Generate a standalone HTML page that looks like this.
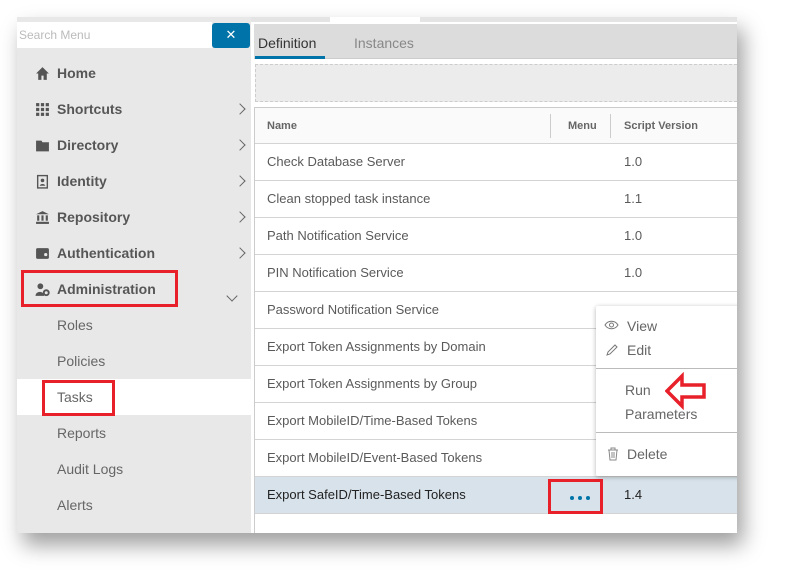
<!DOCTYPE html>
<html><head><style>
*{margin:0;padding:0;box-sizing:border-box}
body{width:785px;height:582px;background:#fff;position:relative;overflow:hidden;font-family:"Liberation Sans",sans-serif}
.a{position:absolute}
.frame{left:17px;top:17px;width:720px;height:516px;background:#fff;box-shadow:6px 12px 20px rgba(0,0,0,.38);overflow:hidden}
.side{left:0;top:0;width:234px;height:516px;background:#e8e8e8}
.mi{position:absolute;left:18px;font-size:14px;font-weight:bold;color:#565656}
.mi svg{position:absolute;left:0;top:1px}
.mi span{position:absolute;left:22px;white-space:nowrap}
.sub{position:absolute;left:40px;font-size:14px;color:#666}
.chev{position:absolute;left:219px;width:8px;height:8px;border-right:1.5px solid #666;border-top:1.5px solid #666;transform:rotate(45deg)}
.row{position:absolute;left:238px;width:482px;height:37px;border-bottom:1px solid #d4d4d4;font-size:13px;color:#5a5a5a}
.row .n{position:absolute;left:12px;top:10px;white-space:nowrap}
.row .v{position:absolute;left:369px;top:10px}
.red{position:absolute;border:3px solid #e8202a}
.dot{position:absolute;width:4px;height:4px;border-radius:2px;background:#0073a8;top:19px}
</style></head><body>
<div class="a frame">
 <div class="a" style="left:0;top:0;width:720px;height:5px;background:#e4e4e4"></div>
 <div class="a" style="left:313px;top:0;width:90px;height:5px;background:#fff"></div>
 <div class="a side">
  <div class="a" style="left:0;top:5px;width:195px;height:26px;background:#fff;font-size:12px;color:#bbb;padding:6px 2px">Search Menu</div>
  <div class="a" style="left:195px;top:6px;width:38px;height:25px;background:#0073a8;border-radius:3px;color:#fff;text-align:center;font-size:13px;line-height:24px">✕</div>
  <div class="mi" style="top:48px"><svg width="15" height="15" viewBox="0 0 14 14"><path d="M7 1L1 7h2v6h3V9h2v4h3V7h2z" fill="#555"/></svg><span>Home</span></div>
  <div class="mi" style="top:84px"><svg width="15" height="15" viewBox="0 0 14 14" fill="#555"><rect x="1" y="1" width="3" height="3"/><rect x="5.5" y="1" width="3" height="3"/><rect x="10" y="1" width="3" height="3"/><rect x="1" y="5.5" width="3" height="3"/><rect x="5.5" y="5.5" width="3" height="3"/><rect x="10" y="5.5" width="3" height="3"/><rect x="1" y="10" width="3" height="3"/><rect x="5.5" y="10" width="3" height="3"/><rect x="10" y="10" width="3" height="3"/></svg><span>Shortcuts</span></div>
  <div class="mi" style="top:120px"><svg width="15" height="15" viewBox="0 0 14 14"><path d="M1 2.5h5l1 1.5h6V12.5H1z" fill="#555"/></svg><span>Directory</span></div>
  <div class="mi" style="top:156px"><svg width="15" height="15" viewBox="0 0 14 14"><rect x="2.5" y="1.5" width="9" height="11.5" fill="none" stroke="#555" stroke-width="1.3"/><circle cx="7" cy="6" r="1.7" fill="#555"/><path d="M4.5 11c0-2.2 5-2.2 5 0z" fill="#555"/></svg><span>Identity</span></div>
  <div class="mi" style="top:192px"><svg width="15" height="15" viewBox="0 0 14 14" fill="#555"><path d="M7 1L1 4h12z"/><rect x="2" y="5" width="2" height="5"/><rect x="6" y="5" width="2" height="5"/><rect x="10" y="5" width="2" height="5"/><rect x="1" y="11" width="12" height="2"/></svg><span>Repository</span></div>
  <div class="mi" style="top:228px"><svg width="15" height="15" viewBox="0 0 14 14"><rect x="1" y="2" width="12" height="10" rx="1.5" fill="#555"/><circle cx="10" cy="8" r="1.5" fill="#e8e8e8"/></svg><span>Authentication</span></div>
  <div class="mi" style="top:264px"><svg width="15" height="15" viewBox="0 0 14 14" fill="#555"><circle cx="5" cy="4" r="2.7"/><path d="M0.5 13c0-5 8-5 8 0z"/><circle cx="10.5" cy="10" r="2.3" fill="none" stroke="#555" stroke-width="1.8"/></svg><span>Administration</span></div>
  <div class="chev" style="top:88px"></div><div class="chev" style="top:124px"></div><div class="chev" style="top:160px"></div><div class="chev" style="top:196px"></div><div class="chev" style="top:232px"></div>
  <div class="a" style="left:211px;top:275px;width:8px;height:8px;border-right:1.5px solid #666;border-bottom:1.5px solid #666;transform:rotate(45deg)"></div>
  <div class="sub" style="top:300px">Roles</div>
  <div class="sub" style="top:336px">Policies</div>
  <div class="a" style="left:0;top:362px;width:234px;height:36px;background:#fff"></div>
  <div class="sub" style="top:372px">Tasks</div>
  <div class="sub" style="top:408px">Reports</div>
  <div class="sub" style="top:444px">Audit Logs</div>
  <div class="sub" style="top:480px">Alerts</div>
  <div class="red" style="left:4px;top:253px;width:157px;height:37px"></div>
  <div class="red" style="left:25px;top:363px;width:73px;height:36px"></div>
 </div>
 <div class="a" style="left:237px;top:7px;width:483px;height:35px;background:#dcdcdc;border-bottom:1px solid #ccc"></div>
 <div class="a" style="left:241px;top:18px;font-size:14px;color:#333">Definition</div>
 <div class="a" style="left:238px;top:39px;width:70px;height:3px;background:#0073a8"></div>
 <div class="a" style="left:337px;top:18px;font-size:14px;color:#888">Instances</div>
 <div class="a" style="left:238px;top:47px;width:482px;height:38px;background:#ececec;border:1px dashed #ccc;border-right:none"></div>
 <div class="a" style="left:237px;top:90px;width:483px;height:426px;border-left:1px solid #ccc;border-top:1px solid #ccc"></div>
 <div class="row" style="top:91px;background:#fafafa;font-size:11px;font-weight:bold;color:#666;height:36px"><span class="n" style="top:12px">Name</span><span class="a" style="left:313px;top:12px">Menu</span><span class="a" style="left:369px;top:12px">Script Version</span><div class="a" style="left:295px;top:6px;width:1px;height:24px;background:#ccc"></div><div class="a" style="left:355px;top:6px;width:1px;height:24px;background:#ccc"></div></div>
 <div class="row" style="top:127px"><span class="n">Check Database Server</span><span class="v">1.0</span></div>
 <div class="row" style="top:164px"><span class="n">Clean stopped task instance</span><span class="v">1.1</span></div>
 <div class="row" style="top:201px"><span class="n">Path Notification Service</span><span class="v">1.0</span></div>
 <div class="row" style="top:238px"><span class="n">PIN Notification Service</span><span class="v">1.0</span></div>
 <div class="row" style="top:275px"><span class="n">Password Notification Service</span></div>
 <div class="row" style="top:312px"><span class="n">Export Token Assignments by Domain</span></div>
 <div class="row" style="top:349px"><span class="n">Export Token Assignments by Group</span></div>
 <div class="row" style="top:386px"><span class="n">Export MobileID/Time-Based Tokens</span></div>
 <div class="row" style="top:423px"><span class="n">Export MobileID/Event-Based Tokens</span></div>
 <div class="row" style="top:460px;background:#d8e2ea;color:#222"><span class="n">Export SafeID/Time-Based Tokens</span><span class="v">1.4</span><div class="dot" style="left:315px"></div><div class="dot" style="left:323px"></div><div class="dot" style="left:331px"></div></div>
 <div class="red" style="left:531px;top:462px;width:55px;height:35px"></div>
 <div class="a" style="left:579px;top:289px;width:150px;height:170px;background:#fff;box-shadow:0 1px 5px rgba(0,0,0,.3);border-radius:2px;font-size:14px;color:#666">
  <svg class="a" style="left:8px;top:14px" width="15" height="10" viewBox="0 0 15 10"><path d="M1 5C4 0 11 0 14 5C11 10 4 10 1 5z" fill="none" stroke="#777"/><circle cx="7.5" cy="5" r="2" fill="none" stroke="#777"/></svg>
  <span class="a" style="left:31px;top:12px">View</span>
  <svg class="a" style="left:10px;top:37px" width="13" height="13" viewBox="0 0 13 13"><path d="M1 12l1-3 7-7 2 2-7 7z" fill="none" stroke="#777"/></svg>
  <span class="a" style="left:31px;top:36px">Edit</span>
  <div class="a" style="left:0;top:62px;width:150px;height:1px;background:#bbb"></div>
  <span class="a" style="left:29px;top:76px">Run</span>
  <span class="a" style="left:29px;top:100px">Parameters</span>
  <div class="a" style="left:0;top:126px;width:150px;height:1px;background:#bbb"></div>
  <svg class="a" style="left:11px;top:141px" width="12" height="14" viewBox="0 0 12 14"><path d="M1 3h10M4 3V1h4v2M2 3l1 10h6l1-10M5 5v6M7 5v6" fill="none" stroke="#888"/></svg>
  <span class="a" style="left:31px;top:140px">Delete</span>
 </div>
 <svg class="a" style="left:648px;top:355px" width="42" height="38" viewBox="0 0 42 38"><path d="M2 19L17 4v9h22v12H17v9z" fill="none" stroke="#e8202a" stroke-width="3.5"/></svg>
</div>
</body></html>
